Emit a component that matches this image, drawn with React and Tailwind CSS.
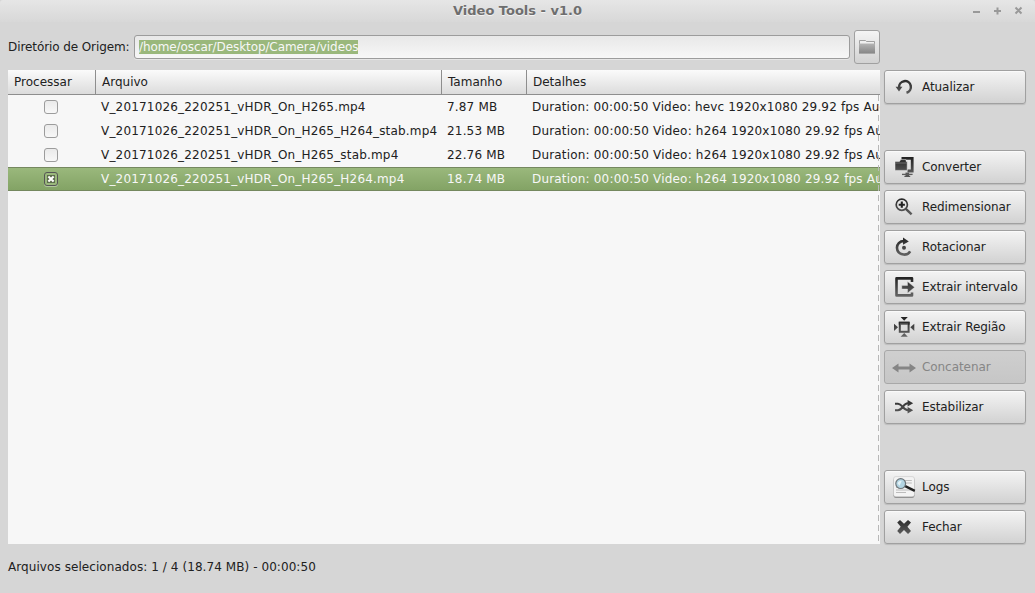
const ROWS = [
  { file: 'V_20171026_220251_vHDR_On_H265.mp4', size: '7.87 MB', codec: 'hevc' },
  { file: 'V_20171026_220251_vHDR_On_H265_H264_stab.mp4', size: '21.53 MB', codec: 'h264' },
  { file: 'V_20171026_220251_vHDR_On_H265_stab.mp4', size: '22.76 MB', codec: 'h264' },
  { file: 'V_20171026_220251_vHDR_On_H265_H264.mp4', size: '18.74 MB', codec: 'h264', selected: true },
];

function Gradient({ id }) {
  return (
    <defs>
      <linearGradient id={id} x1="0" y1="0" x2="0" y2="24" gradientUnits="userSpaceOnUse">
        <stop offset="0.1" stopColor="#222" />
        <stop offset="0.9" stopColor="#666" />
      </linearGradient>
    </defs>
  );
}

function Icon({ name }) {
  const g = `url(#g-${name})`;
  const shapes = {
    refresh: (
      <>
        <path d="M7.1 12.6 A5.9 5.9 0 1 1 14.5 17.7" fill="none" stroke={g} strokeWidth="2.5" />
        <path d="M3.6 11.8 H10.4 L7 16.6 Z" fill={g} />
      </>
    ),
    convert: (
      <>
        <path d="M9.5 3.4 H20.2 V16 H15.5" fill="none" stroke={g} strokeWidth="2.8" />
        <path d="M3 6.4 H7.5 L8.8 4.6 H14 V6.4 H15.2 V15.4 H3 Z" fill={g} stroke="#f0f0f0" strokeWidth="0.5" />
        <path d="M3.4 8 H14.8" stroke="#999" strokeWidth="0.6" />
        <path d="M15.3 17.6 V21" stroke="#555" strokeWidth="3.6" />
        <path d="M10 19.4 H20.6" stroke="#5c5c5c" strokeWidth="1.3" />
        <path d="M12.4 21.4 H18.2" stroke="#555" strokeWidth="1.2" />
      </>
    ),
    zoom: (
      <>
        <circle cx="9.8" cy="9.7" r="5.6" fill="none" stroke={g} strokeWidth="1.7" />
        <path d="M13.8 13.8 L19.6 19.4" stroke={g} strokeWidth="2.4" />
        <path d="M9.8 6.6 V12.8 M6.7 9.7 H12.9" stroke="#222" strokeWidth="2.1" />
      </>
    ),
    rotate: (
      <>
        <path d="M12.5 6 C7.5 5.8 4.8 9.3 5 13 C5.3 19.8 14.7 22 18.2 16.4" fill="none" stroke={g} strokeWidth="2.6" />
        <path d="M11 2.4 L16.8 6.4 L11 9.8 Z" fill={g} />
        <circle cx="12" cy="12.7" r="2" fill="#444" />
      </>
    ),
    exportx: (
      <>
        <path d="M20 7 V3.4 H4.5 V20.4 H20 V17.5" fill="none" stroke={g} strokeWidth="2.6" strokeLinejoin="round" />
        <path d="M9.8 10.6 H15.5 V6.6 L22.6 12.3 L15.5 18.2 V14 H9.8 Z" fill={g} stroke="#eaeaea" strokeWidth="0.4" />
      </>
    ),
    region: (
      <>
        <rect x="7.8" y="7.8" width="8.8" height="9" fill="#ddd" stroke={g} strokeWidth="2" />
        <path d="M6.8 8.2 H17.6" stroke="#2c2c2c" strokeWidth="3" />
        <path d="M8.5 9 H16" stroke="#ccc" strokeWidth="0.8" strokeDasharray="1 1" />
        <path d="M8.6 2 H15.8 L12.2 5.8 Z M8.6 21.8 H15.8 L12.2 18 Z M2 8.7 V15.9 L6 12.3 Z M22.3 8.7 V15.9 L18.3 12.3 Z" fill={g} />
      </>
    ),
    concat: (
      <path d="M0 13 L6.5 8.6 V11.4 H17.5 V8.6 L24 13 L17.5 17.4 V14.6 H6.5 V17.4 Z" fill="#858585" />
    ),
    shuffle: (
      <>
        <path d="M3 8.8 H6 C10.5 8.8 11 15.3 16 15.3 H18 M3 15.3 H6 C10.5 15.3 11 8.2 16 8.2 H18" fill="none" stroke={g} strokeWidth="2.1" />
        <path d="M15.6 4.9 L21.2 8.2 L15.6 11.4 Z M15.6 12.1 L21.2 15.3 L15.6 18.6 Z" fill={g} />
      </>
    ),
    logs: (
      <>
        <rect x="1.5" y="3" width="21" height="19.8" rx="2.4" fill="#6f6f6f" />
        <rect x="1.5" y="1.6" width="21" height="20.2" rx="2.4" fill="#f3f3f3" stroke="#c4c4c4" strokeWidth="0.6" />
        <path d="M13 5.5 H19.8 M14 8 H19.8 M4 12.5 H10 M4 15 H19.8 M4 17.5 H14" stroke="#b5b5b5" strokeWidth="0.9" />
        <path d="M12.2 10.6 L22.8 15.9" stroke="#222" strokeWidth="2.4" />
        <circle cx="8.7" cy="8.6" r="4.9" fill="#b2d4e2" stroke="#6c7479" strokeWidth="1.2" />
        <path d="M5.6 8.6 Q6.3 5.6 9.7 5.9 L7.5 10.8 Z" fill="#e3f2f7" />
      </>
    ),
    close: (
      <path d="M5.2 7.5 L8 4.9 L12 8.7 L16 4.9 L19 7.5 L15.4 11.8 L19 16 L16 18.9 L12 15.1 L8 18.9 L5.2 16 L8.7 11.8 Z" fill={g} />
    ),
  };
  return (
    <svg width="24" height="24" viewBox="0 0 24 24" className="shrink-0">
      <Gradient id={`g-${name}`} />
      {shapes[name]}
    </svg>
  );
}

function ActionButton({ icon, children, disabled }) {
  return (
    <button
      disabled={disabled}
      className={
        'flex h-[34px] w-[142px] shrink-0 items-center gap-[6px] rounded-[3px] border pl-[7px] text-left tracking-[-0.07px] whitespace-nowrap ' +
        (disabled
          ? 'border-[#a8a8a8] bg-linear-to-b from-[#cfcfcf] to-[#c6c6c6] text-[#868686]'
          : 'border-[#a0a0a0] bg-linear-to-b from-[#f4f4f4] to-[#d2d2d2] text-[#212121] shadow-[0_1px_1px_rgba(0,0,0,0.12),inset_0_1px_0_#fafafa]')
      }
    >
      <Icon name={icon} />
      <span>{children}</span>
    </button>
  );
}

function Checkbox({ checked }) {
  return (
    <span
      className={
        'flex h-[14px] w-[14px] items-center justify-center rounded-[3px] border ' +
        (checked
          ? 'border-[#565656] bg-[#9ab87c] shadow-[0_1px_0_rgba(255,255,255,0.35)]'
          : 'border-[#9c9c9c] bg-linear-to-b from-[#eaeaea] to-[#f8f8f8]')
      }
    >
      {checked && (
        <svg width="8" height="8" viewBox="0 0 8 8">
          <rect width="8" height="8" fill="#5d6e4c" />
          <path d="M1.4 1.4 L6.6 6.6 M6.6 1.4 L1.4 6.6" stroke="#fff" strokeWidth="2.1" />
        </svg>
      )}
    </span>
  );
}

function HeaderCell({ children, last }) {
  return (
    <div className={'flex items-center pl-[6px] ' + (last ? '' : 'border-r border-[#8e8e8e]')}>
      {children}
    </div>
  );
}

export default function App() {
  return (
    <div className="flex h-[593px] w-[1035px] flex-col overflow-hidden bg-[#d6d6d6] font-['DejaVu_Sans',sans-serif] text-[12px] leading-4 text-[#212121]">
      <header className="grid h-[22px] shrink-0 grid-cols-[1fr_auto_1fr] items-center rounded-t-[3px] bg-linear-to-b from-[#e6e6e6] to-[#d8d8d8]">
        <span />
        <h1 className="text-[13px] font-bold text-[#6e6e6e] [text-shadow:0_1px_0_#f4f4f4]">Video Tools - v1.0</h1>
        <svg width="60" height="22" viewBox="0 0 60 22" className="mr-[6px] justify-self-end" fill="none" stroke="#999" strokeWidth="2">
          <path d="M4 12 H11 M25 11 H32 M28.5 7.5 V14.5 M46.5 7.5 L52.5 13.5 M52.5 7.5 L46.5 13.5" />
        </svg>
      </header>

      <div className="flex h-[48px] shrink-0 items-start pt-[8px] pl-[8px]">
        <label className="mt-[9px] w-[126px] tracking-[-0.09px] whitespace-nowrap">Diretório de Origem:</label>
        <div className="mt-[5px] flex h-[24px] w-[716px] items-center rounded-[3px] border border-[#9c9c9c] bg-linear-to-b from-[#e8e8e8] to-[#f7f7f7] pl-[4px] shadow-[0_1px_0_#e6e6e6]">
          <span className="h-[14px] bg-[#9ab87c] leading-[14px] tracking-[-0.09px] text-[#f7f7f7]">/home/oscar/Desktop/Camera/videos</span>
        </div>
        <button className="ml-[4px] flex h-[34px] w-[26px] items-center justify-center rounded-[3px] border border-[#a0a0a0] bg-linear-to-b from-[#f4f4f4] to-[#d2d2d2]">
          <svg width="18" height="16" viewBox="0 0 18 16">
            <defs>
              <linearGradient id="folder" x1="0" y1="0" x2="0" y2="1">
                <stop offset="0" stopColor="#b5b5b5" />
                <stop offset="1" stopColor="#858585" />
              </linearGradient>
            </defs>
            <path d="M1.5 5 V1.5 H7.5 L8.5 2.5 H16.5 V5" fill="#f0f0f0" stroke="#999" strokeWidth="0.9" />
            <path d="M1 4.5 H17 V14.6 H1 Z" fill="url(#folder)" />
          </svg>
        </button>
      </div>

      <main className="flex h-[474px] shrink-0 gap-[4px] pl-[8px]">
        <section className="relative w-[872px] overflow-hidden bg-[#f7f7f7]">
          <div className="grid h-[25px] grid-cols-[88px_346px_85px_353px] border-b border-[#8e8e8e] bg-linear-to-b from-[#fbfbfb] to-[#dcdcdc]">
            <HeaderCell>Processar</HeaderCell>
            <HeaderCell>Arquivo</HeaderCell>
            <HeaderCell>Tamanho</HeaderCell>
            <HeaderCell last>Detalhes</HeaderCell>
          </div>
          {ROWS.map((r) => (
            <div
              key={r.file}
              className={
                'grid h-[24px] grid-cols-[88px_346px_85px_353px] items-center whitespace-nowrap ' +
                (r.selected ? 'border-y border-[#75885f] bg-linear-to-b from-[#9ab87c] to-[#83a365] text-[#f7f7f7]' : '')
              }
            >
              <span className="pl-[36px]"><Checkbox checked={r.selected} /></span>
              <span className="pl-[5px] tracking-[0.18px]">{r.file}</span>
              <span className="pl-[5px] tracking-[0.18px]">{r.size}</span>
              <span className={r.codec === 'hevc' ? 'pl-[5px] tracking-[0.15px]' : 'pl-[5px] tracking-[0.18px]'}>
                Duration: 00:00:50 Video: {r.codec} 1920x1080 29.92 fps Audio
              </span>
            </div>
          ))}
          <div className="absolute top-[25px] right-[1px] bottom-0 w-px bg-[repeating-linear-gradient(to_bottom,#b8b8b8_0,#b8b8b8_6px,transparent_6px,transparent_10px)]" />
        </section>

        <nav className="flex flex-col gap-[6px]">
          <ActionButton icon="refresh">Atualizar</ActionButton>
          <div className="h-[34px] shrink-0" />
          <ActionButton icon="convert">Converter</ActionButton>
          <ActionButton icon="zoom">Redimensionar</ActionButton>
          <ActionButton icon="rotate">Rotacionar</ActionButton>
          <ActionButton icon="exportx">Extrair intervalo</ActionButton>
          <ActionButton icon="region">Extrair Região</ActionButton>
          <ActionButton icon="concat" disabled>Concatenar</ActionButton>
          <ActionButton icon="shuffle">Estabilizar</ActionButton>
          <div className="h-[34px] shrink-0" />
          <ActionButton icon="logs">Logs</ActionButton>
          <ActionButton icon="close">Fechar</ActionButton>
        </nav>
      </main>

      <footer className="pt-[15px] pl-[8px] tracking-[0.07px]">Arquivos selecionados: 1 / 4 (18.74 MB) - 00:00:50</footer>
    </div>
  );
}
